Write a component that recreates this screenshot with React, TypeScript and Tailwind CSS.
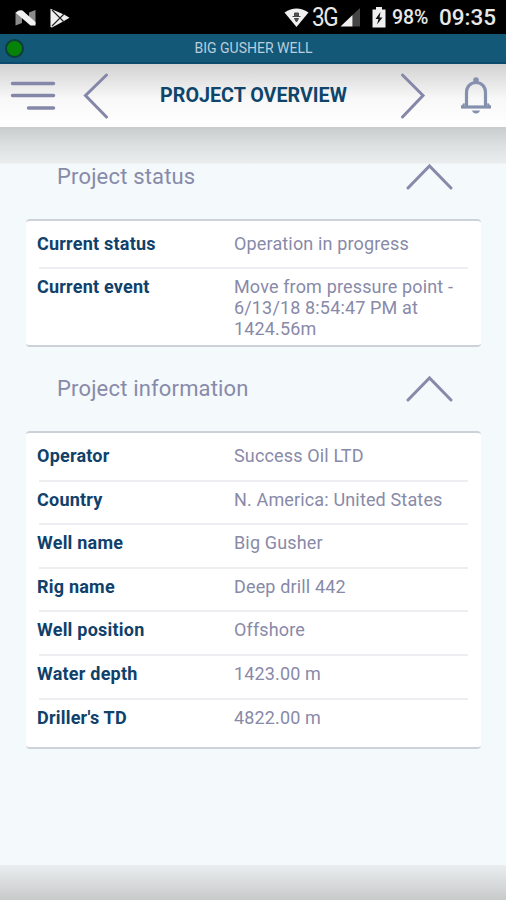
interface Field {
	label: string;
	value: string;
}

interface SectionProps {
	title: string;
	fields: Field[];
}

const statusFields: Field[] = [
	{ label: "Current status", value: "Operation in progress" },
	{
		label: "Current event",
		value: "Move from pressure point - 6/13/18 8:54:47 PM at 1424.56m",
	},
];

const informationFields: Field[] = [
	{ label: "Operator", value: "Success Oil LTD" },
	{ label: "Country", value: "N. America: United States" },
	{ label: "Well name", value: "Big Gusher" },
	{ label: "Rig name", value: "Deep drill 442" },
	{ label: "Well position", value: "Offshore" },
	{ label: "Water depth", value: "1423.00 m" },
	{ label: "Driller's TD", value: "4822.00 m" },
];

function StatusBar() {
	return (
		<div className="flex h-[34px] items-center bg-black pl-[15px] pr-[10px] pt-px text-[#e8e8e8]">
			{/* Notification icons */}
			<svg className="h-[18px] w-[22px]" viewBox="0 0 22 18">
				<path d="M0.500 3 L7 5 V14 L0.500 16.500 Z M14 3.500 L20.500 1 V15 L14 13 Z" fill="#8a8a8a" />
				<path d="M1 3.500 Q3.500 0.500 7.500 1.500 L20.500 13 V16.500 H15.500 L1.500 4.500 Z" fill="#f2f2f2" />
			</svg>
			<svg className="ml-[12px] h-[20px] w-[21px]" viewBox="0 0 21 20">
				<path d="M1.500 0.800 L15 6.500 L20.500 9.800 L15 13 L3 19.500 L1.500 19 Z" fill="#f0f0f0" />
				<path d="M3 2 L15.500 14.500 M3 18 L15.500 5.500" stroke="#222" strokeWidth="1.200" fill="none" />
			</svg>

			{/* Signal, battery and clock */}
			<div className="ml-auto flex items-center">
				<svg className="h-[20px] w-[25px]" viewBox="0 0 25 20">
					<path d="M0.500 4.500 Q12.500 -3.500 24.500 4.500 L12.500 19 Z" fill="#f0f0f0" />
					<path d="M8.500 8.500 H16.500 M10.500 8 V5 H14.500 V8 Z M10.500 10.500 H14.500 L12.500 14 Z" stroke="#444" strokeWidth="1" fill="#555" />
				</svg>
				<span className="ml-[3px] w-[28px] origin-left scale-x-[0.9] text-[25px] leading-none tracking-[-1.5px]">3G</span>
				<svg className="h-[19px] w-[21px]" viewBox="0 0 21 19">
					<path d="M20 0 V18.500 H12.500 V7 Z" fill="#454545" />
					<path d="M12.500 7 V18.500 H0.500 Z" fill="#f0f0f0" />
				</svg>
				<svg className="ml-[11px] h-[21px] w-[14px]" viewBox="0 0 14 21">
					<path d="M4 0 H10 V2.500 H13.500 V20.500 H0.500 V2.500 H4 Z" fill="#f0f0f0" />
					<path d="M8.500 5 L3.500 12 H6.500 L5 17.500 L10.500 10.500 H7.500 Z" fill="#111" />
				</svg>
				<span className="ml-[6px] w-[38px] whitespace-nowrap text-[19.500px] font-medium leading-none">98%</span>
				<span className="ml-[9px] whitespace-nowrap text-[22.500px] font-medium leading-none">09:35</span>
			</div>
		</div>
	);
}

function WellBar() {
	return (
		<div className="flex h-[30px] items-center border-b-2 border-[#0c4a6d] bg-[#145878] pl-[5px]">
			<span className="h-[19px] w-[19px] rounded-full border-2 border-[#0c3f3c] bg-[#068206]" />
			<span className="flex-1 pr-[23px] text-center text-[14px] leading-none text-[#b9cede]">
				BIG GUSHER WELL
			</span>
		</div>
	);
}

function Header() {
	return (
		<header className="flex h-[63px] items-center bg-linear-to-b from-[#d2d2d3] via-[#f8f8f8] via-55% to-white pl-[10px] pr-[14px] text-[#8587a8]">
			<button aria-label="Menu">
				<svg className="block h-[32px] w-[46px]" viewBox="0 0 46 32" stroke="currentColor" strokeWidth="3.500" strokeLinecap="round">
					<path d="M2.500 3.500 H43.500 M2.500 15.500 H43.500 M18.500 28 H43.500" />
				</svg>
			</button>
			<button aria-label="Previous" className="ml-[26px]">
				<svg className="block h-[46px] w-[28px]" viewBox="0 0 28 46" fill="none" stroke="currentColor" strokeWidth="3" strokeLinecap="round">
					<path d="M24.500 2 L3.500 22.500 L24.500 44" />
				</svg>
			</button>
			<h1 className="flex-1 whitespace-nowrap pr-px text-center text-[19.700px] font-bold leading-none text-[#0d456b]">
				PROJECT OVERVIEW
			</h1>
			<button aria-label="Next" className="mr-[34px]">
				<svg className="block h-[46px] w-[28px]" viewBox="0 0 28 46" fill="none" stroke="currentColor" strokeWidth="3" strokeLinecap="round">
					<path d="M4.500 2 L25 22.500 L4.500 44" />
				</svg>
			</button>
			<button aria-label="Notifications">
				<svg className="block h-[37px] w-[32px]" viewBox="0 0 32 37" fill="none" stroke="#8490ae" strokeWidth="3.200">
					<path d="M6.500 29 V15.500 C6.500 9 11 5.500 16 5.500 C21 5.500 25.500 9 25.500 15.500 V29" />
					<path d="M1 30 H31" />
					<path d="M4.500 26.500 L1.800 30 M27.500 26.500 L30.200 30" strokeWidth="2" />
					<circle cx="16" cy="3" r="2.800" fill="#8490ae" stroke="none" />
					<path d="M12 33.500 H20 Q19 36.500 16 36.500 Q13 36.500 12 33.500 Z" fill="#8490ae" stroke="none" />
				</svg>
			</button>
		</header>
	);
}

function Section({ title, fields }: SectionProps) {
	return (
		<section className="pl-[26px] pr-[25px]">
			<div className="flex h-[84px] items-center justify-between pl-[31px] pr-[28px] text-[#888aaa]">
				<h2 className="text-[22px] leading-none tracking-[0.17px]">{title}</h2>
				<svg className="h-[28px] w-[48px]" viewBox="0 0 48 28" fill="none" stroke="currentColor" strokeWidth="3" strokeLinecap="round">
					<path d="M3 25 L24.500 3 L46 25" />
				</svg>
			</div>
			<dl className="rounded-sm border-y-2 border-[#cdd1da] bg-white pl-[11px] pr-[13px] pt-[4px] text-[18px] leading-[21px] tracking-[0.15px]">
				{fields.map((field, index) => {
					const isLast = index === fields.length - 1;

					return (
						<div key={field.label} className={isLast ? "min-h-[48px] pb-[6px]" : "h-[43.6px]"}>
							<div className="flex pt-[8px]">
								<dt className="w-[197px] shrink-0 font-bold tracking-[0.22px] text-[#0f416b]">{field.label}</dt>
								<dd className="flex-1 text-[#888aa8]">{field.value}</dd>
							</div>
							{!isLast && <div className="ml-[2px] mt-[13.6px] h-[2px] bg-[#eceef1]" />}
						</div>
					);
				})}
			</dl>
		</section>
	);
}

export default function App() {
	return (
		<div className="flex h-[900px] w-[506px] flex-col overflow-hidden bg-[#f4f9fb] font-['Roboto',sans-serif]">
			<StatusBar />
			<WellBar />
			<Header />
			<main className="flex-1 bg-[linear-gradient(to_bottom,#c9cccd_0px,#dce0e1_18px,#e9edee_36px,transparent_37px)] pt-[7.5px]">
				<Section title="Project status" fields={statusFields} />
				<Section title="Project information" fields={informationFields} />
			</main>
			<div className="h-[35px] bg-linear-to-b from-[#eaeeef] to-[#c8caca]" />
		</div>
	);
}
